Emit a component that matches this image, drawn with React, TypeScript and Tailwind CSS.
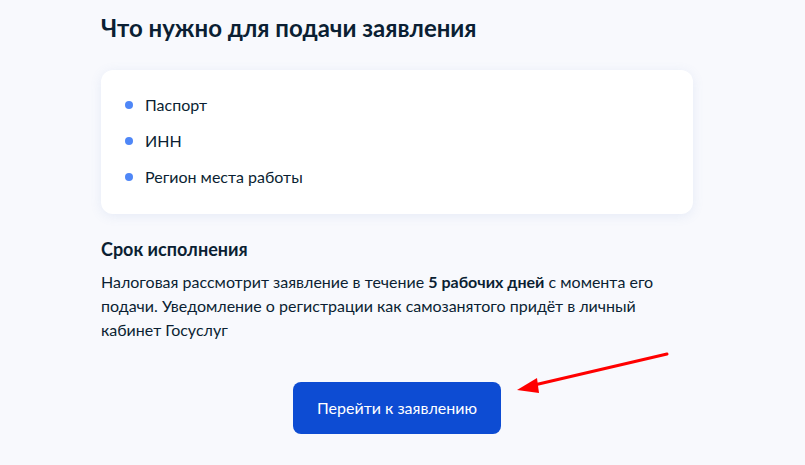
import React from "react";

export default function App() {
  const items = ["Паспорт", "ИНН", "Регион места работы"];
  return (
    <div
      className="relative w-[805px] h-[465px] overflow-hidden bg-[#f8f9fd] text-[#0b1f33]"
      style={{ fontFamily: "Lato, 'Noto Sans', sans-serif" }}
    >
      <div className="ml-[101px] w-[592px] flex flex-col">
        <h2 className="pt-[14px] text-[24px] leading-[28px] font-bold">Что нужно для подачи заявления</h2>
        <div className="mt-[28px] rounded-[12px] bg-white shadow-[0_2px_12px_rgba(102,131,200,0.12)] pl-6 pt-[23px] pb-[25px] flex flex-col gap-3">
          {items.map((t) => (
            <div key={t} className="flex items-center gap-3 text-[16px] leading-[24px]">
              <span className="w-2 h-2 rounded-full bg-[#4f87f7]" />
              <span>{t}</span>
            </div>
          ))}
        </div>
        <h3 className="mt-[23px] text-[18px] leading-[24px] font-bold">Срок исполнения</h3>
        <p className="mt-[9px] text-[16px] leading-[24px]">
          Налоговая рассмотрит заявление в течение <b>5 рабочих дней</b> с момента его подачи. Уведомление о
          регистрации как самозанятого придёт в личный кабинет Госуслуг
        </p>
        <div className="mt-[40px] flex justify-center">
          <button className="w-[208px] h-[52px] rounded-[8px] bg-[#0d4cd3] text-white text-[16px] leading-[24px]">
            Перейти к заявлению
          </button>
        </div>
      </div>
      <svg className="absolute left-0 top-0" width="805" height="465" viewBox="0 0 805 465">
        <line x1="667" y1="354" x2="530" y2="386" stroke="#ff0000" strokeWidth="3" strokeLinecap="round" />
        <polygon points="517,390 537,378 539,393" fill="#ff0000" />
      </svg>
    </div>
  );
}
